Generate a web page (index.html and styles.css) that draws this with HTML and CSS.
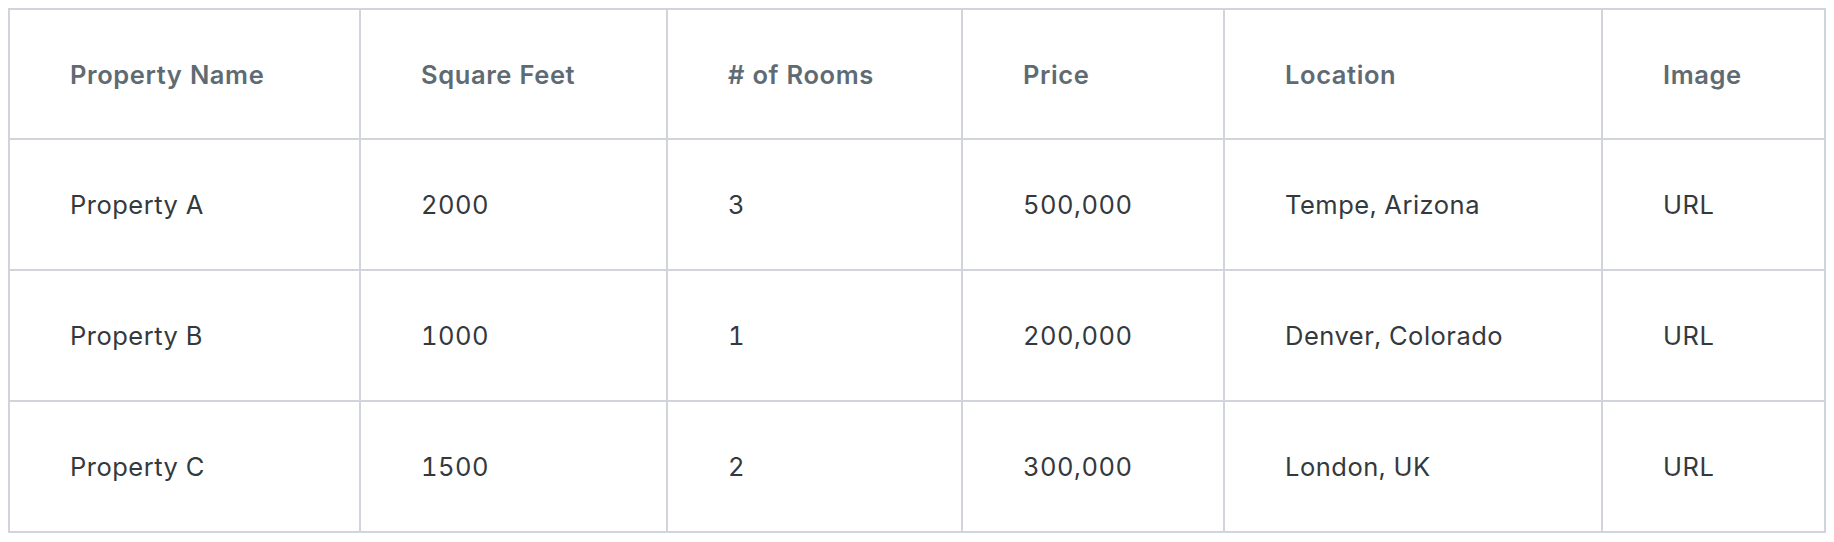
FILE: index.html
```html
<!DOCTYPE html>
<html lang="en">
<head>
<meta charset="utf-8">
<title>Properties</title>
<link rel="stylesheet" href="styles.css">
</head>
<body>
<table class="props">
  <colgroup>
    <col class="c1"><col class="c2"><col class="c3"><col class="c4"><col class="c5"><col class="c6">
  </colgroup>
  <thead>
    <tr>
      <th>Property Name</th>
      <th>Square Feet</th>
      <th># of Rooms</th>
      <th>Price</th>
      <th>Location</th>
      <th>Image</th>
    </tr>
  </thead>
  <tbody>
    <tr>
      <td>Property A</td><td>2000</td><td>3</td><td>500,000</td><td>Tempe, Arizona</td><td>URL</td>
    </tr>
    <tr>
      <td>Property B</td><td>1000</td><td>1</td><td>200,000</td><td>Denver, Colorado</td><td>URL</td>
    </tr>
    <tr>
      <td>Property C</td><td>1500</td><td>2</td><td>300,000</td><td>London, UK</td><td>URL</td>
    </tr>
  </tbody>
</table>
</body>
</html>
```
FILE: styles.css
```css
html, body {
  background: #ffffff;
}
body {
  margin: 8px;
  font-family: Inter, "Noto Sans", sans-serif;
}
.props {
  width: 100%;
  border-collapse: collapse;
  table-layout: fixed;
  border: 2px solid #d1d5db;
}
.c1 { width: 351px; }
.c2 { width: 307px; }
.c3 { width: 295px; }
.c4 { width: 262px; }
.c5 { width: 378px; }
.props th,
.props td {
  border: 2px solid #d1d5db;
  padding: 0 0 0 60px;
  text-align: left;
  vertical-align: middle;
  box-sizing: border-box;
  font-size: 25.5px;
  font-variant-numeric: tabular-nums;
}
.props th {
  height: 130px;
  font-weight: 600;
  color: #5f6b73;
  letter-spacing: 0.6px;
}
.props td {
  height: 131px;
  font-weight: 400;
  color: #34393d;
  letter-spacing: 0.5px;
}
```
